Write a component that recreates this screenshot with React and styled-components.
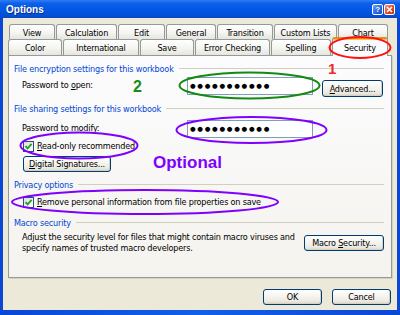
import React from "react";
import styled, { createGlobalStyle } from "styled-components";

const FONT = `"DejaVu Sans Condensed", "Liberation Sans", Tahoma, sans-serif`;

const Global = createGlobalStyle`
  html, body { margin: 0; padding: 0; background: #ffffff; overflow: hidden; }
  body { font-family: ${FONT}; }
`;

const Window = styled.div`
  position: relative;
  width: 400px;
  height: 315px;
  display: flex;
  flex-direction: column;
  background: linear-gradient(90deg, #0a47d6, #1160ea 50%, #0a47d6);
  font-family: ${FONT};
  font-size: 9px;
  letter-spacing: -0.18px;
  color: #000;
  box-sizing: border-box;
`;

const TitleBar = styled.div`
  height: 18px;
  flex: none;
  display: flex;
  align-items: center;
  padding: 0 5px 0 6px;
  background: linear-gradient(#2f7cf5 0%, #0b5fe9 20%, #0457e2 55%, #0350d6 85%, #0a47c4 100%);
`;

const Title = styled.div`
  flex: 1;
  color: #ffffff;
  font-weight: bold;
  font-size: 10px;
  letter-spacing: 0;
  font-family: "Liberation Sans", sans-serif;
  text-shadow: 1px 1px 0 #0c2a86;
`;

const CapButton = styled.div`
  width: 11px;
  height: 11px;
  box-sizing: border-box;
  margin-left: 1px;
  border: 1px solid #ffffff;
  border-radius: 2px;
  display: flex;
  align-items: center;
  justify-content: center;
  color: #ffffff;
  font-weight: bold;
  font-size: 8px;
  font-family: "Liberation Sans", sans-serif;
  background: ${(p) =>
    p.$close
      ? "linear-gradient(135deg, #f39a7d, #e2461f 55%, #c1330f)"
      : "linear-gradient(135deg, #76a5f8, #2a66e6 55%, #1a4fcf)"};
`;

const Body = styled.div`
  flex: 1;
  margin: 0 3px 5px 3px;
  background: #ece9d8;
  padding: 6px 5px 0 5px;
  display: flex;
  flex-direction: column;
`;

const TabStrip = styled.div`
  display: flex;
  flex-direction: column;
  flex: none;
`;

const TabRow = styled.div`
  display: flex;
  gap: 1px;
  height: ${(p) => p.$h}px;
  align-items: flex-end;
  margin-left: ${(p) => p.$indent}px;
`;

const Tab = styled.div`
  position: relative;
  z-index: ${(p) => (p.$active ? 3 : 1)};
  flex: none;
  width: ${(p) => p.$w}px;
  height: ${(p) => (p.$active ? 19 : p.$h)}px;
  margin-bottom: ${(p) => (p.$active ? -1 : 0)}px;
  box-sizing: border-box;
  border: 1px solid #919b9c;
  border-bottom: none;
  border-top: ${(p) => (p.$active ? "2px solid #e68b2c" : "1px solid #919b9c")};
  border-radius: 3px 3px 0 0;
  background: ${(p) =>
    p.$active ? "#fcfcfe" : "linear-gradient(#ffffff, #f3f3ef 60%, #e6e5dd)"};
  box-shadow: ${(p) => (p.$active ? "inset 0 1px 0 #ffc73c" : "none")};
  display: flex;
  align-items: center;
  justify-content: center;
  white-space: nowrap;
  padding-top: ${(p) => (p.$active ? 0 : 1)}px;
`;

const Panel = styled.div`
  flex: none;
  height: 223px;
  box-sizing: border-box;
  border: 1px solid #919b9c;
  background: linear-gradient(#fcfcfe, #f4f3ee);
  box-shadow: 1px 1px 0 #d6d2c2;
  padding: 6px 7px 0 5px;
  display: flex;
  flex-direction: column;
`;

const Section = styled.div`
  display: flex;
  align-items: center;
  height: 13px;
  margin-top: ${(p) => p.$mt || 0}px;
  color: #0046d5;
  white-space: nowrap;
  &::after {
    content: "";
    flex: 1;
    height: 1px;
    margin-left: 5px;
    background: #d0d0bf;
  }
`;

const FieldRow = styled.div`
  display: flex;
  align-items: flex-start;
  padding-left: 8px;
  margin-top: ${(p) => p.$mt}px;
`;

const Label = styled.div`
  width: 165px;
  flex: none;
  line-height: 14px;
  padding-top: 1px;
`;

const Field = styled.div`
  width: 126px;
  height: 18px;
  flex: none;
  box-sizing: border-box;
  border: 1px solid #7f9db9;
  background: #ffffff;
  display: flex;
  align-items: center;
  padding-left: 2px;
  font-family: "DejaVu Sans", sans-serif;
  font-size: 6.5px;
  letter-spacing: 1.7px;
  color: #000;
`;

const Button = styled.div`
  width: ${(p) => p.$w}px;
  height: ${(p) => p.$h || 16}px;
  flex: none;
  box-sizing: border-box;
  margin-left: ${(p) => (p.$push ? "auto" : `${p.$ml || 0}px`)};
  margin-top: ${(p) => p.$mt || 0}px;
  border: 1px solid #003c74;
  border-radius: 3px;
  background: linear-gradient(#ffffff, #f5f4ef 45%, #ebe9e0 80%, #d8d3c6);
  box-shadow: inset -1px -1px 0 #d6d0c5;
  display: flex;
  align-items: center;
  justify-content: center;
  white-space: nowrap;
`;

const CheckRow = styled.div`
  display: flex;
  align-items: center;
  height: 12px;
  padding-left: 9px;
  margin-top: ${(p) => p.$mt}px;
  white-space: nowrap;
`;

const Box = styled.div`
  width: 11px;
  height: 11px;
  box-sizing: border-box;
  border: 1px solid #1c5180;
  background: linear-gradient(135deg, #dcdcd7, #ffffff);
  margin-right: 3px;
  display: flex;
  align-items: center;
  justify-content: center;
`;

const ButtonRow = styled.div`
  display: flex;
  padding-left: 9px;
  margin-top: ${(p) => p.$mt}px;
`;

const MacroRow = styled.div`
  display: flex;
  align-items: center;
  padding-left: 8px;
  margin-top: 3px;
`;

const MacroText = styled.div`
  width: 273px;
  flex: none;
  line-height: 11px;
`;

const Footer = styled.div`
  display: flex;
  justify-content: flex-end;
  gap: 10px;
  margin-top: 11px;
  padding-right: 1px;
`;

const Overlay = styled.svg`
  position: absolute;
  left: 0;
  top: 0;
  z-index: 10;
  pointer-events: none;
`;

const Note = styled.div`
  position: absolute;
  z-index: 11;
  left: ${(p) => p.$x}px;
  top: ${(p) => p.$y}px;
  color: ${(p) => p.$c};
  font-family: "Liberation Sans", sans-serif;
  font-weight: bold;
  font-size: ${(p) => p.$s}px;
  letter-spacing: 0;
  line-height: 1;
`;

const row1 = [
  ["View", 46],
  ["Calculation", 61],
  ["Edit", 47],
  ["General", 50],
  ["Transition", 56],
  ["Custom Lists", 63],
  ["Chart", 50],
];
const row2 = [
  ["Color", 54],
  ["International", 76],
  ["Save", 54],
  ["Error Checking", 75],
  ["Spelling", 60],
  ["Security", 56, true],
];

const Check = () => (
  <svg width="9" height="9" viewBox="0 0 9 9">
    <path d="M1.5 4.2 L3.6 6.4 L7.6 1.8" fill="none" stroke="#21a121" strokeWidth="1.8" />
  </svg>
);

const DOTS = "●●●●●●●●●●●";

export default function App() {
  return (
    <>
      <Global />
      <Window>
        <TitleBar>
          <Title>Options</Title>
          <CapButton>?</CapButton>
          <CapButton $close>
            <svg width="7" height="7" viewBox="0 0 7 7">
              <path d="M1 1 L6 6 M6 1 L1 6" stroke="#fff" strokeWidth="1.5" />
            </svg>
          </CapButton>
        </TitleBar>
        <Body>
          <TabStrip>
            <TabRow $h={15} $indent={1}>
              {row1.map(([t, w]) => (
                <Tab key={t} $w={w} $h={15}>
                  {t}
                </Tab>
              ))}
            </TabRow>
            <TabRow $h={16} $indent={0}>
              {row2.map(([t, w, a]) => (
                <Tab key={t} $w={w} $h={16} $active={a}>
                  {t}
                </Tab>
              ))}
            </TabRow>
          </TabStrip>
          <Panel>
            <Section>File encryption settings for this workbook</Section>
            <FieldRow $mt={2}>
              <Label>
                Password to <u>o</u>pen:
              </Label>
              <Field>{DOTS}</Field>
              <Button $w={61} $h={17} $ml={9} $mt={3}>
                <span>
                  <u>A</u>dvanced...
                </span>
              </Button>
            </FieldRow>
            <Section $mt={5}>File sharing settings for this workbook</Section>
            <FieldRow $mt={5}>
              <Label>
                Password to <u>m</u>odify:
              </Label>
              <Field>{DOTS}</Field>
            </FieldRow>
            <CheckRow $mt={2}>
              <Box>
                <Check />
              </Box>
              <span>
                <u>R</u>ead-only recommended
              </span>
            </CheckRow>
            <ButtonRow $mt={4}>
              <Button $w={88}>
                <span>
                  <u>D</u>igital Signatures...
                </span>
              </Button>
            </ButtonRow>
            <Section $mt={6}>Privacy options</Section>
            <CheckRow $mt={5}>
              <Box>
                <Check />
              </Box>
              <span>
                <u>R</u>emove personal information from file properties on save
              </span>
            </CheckRow>
            <Section $mt={8}>Macro security</Section>
            <MacroRow>
              <MacroText>
                Adjust the security level for files that might contain macro viruses and
                specify names of trusted macro developers.
              </MacroText>
              <Button $w={80} $push>
                <span>
                  Macro <u>S</u>ecurity...
                </span>
              </Button>
            </MacroRow>
          </Panel>
          <Footer>
            <Button $w={59}>
              <span>OK</span>
            </Button>
            <Button $w={59}>
              <span>Cancel</span>
            </Button>
          </Footer>
        </Body>

        <Overlay width="400" height="315" viewBox="0 0 400 315">
          <ellipse cx="360" cy="47.5" rx="30.5" ry="10.5" fill="none" stroke="#ff1010" strokeWidth="2" />
          <ellipse cx="249.5" cy="85.5" rx="70" ry="13" fill="none" stroke="#138a13" strokeWidth="2" />
          <ellipse cx="251.5" cy="130" rx="75" ry="13" fill="none" stroke="#8000ff" strokeWidth="2" />
          <ellipse cx="79" cy="145.5" rx="58.5" ry="13" fill="none" stroke="#8000ff" strokeWidth="2" />
          <ellipse cx="145" cy="202" rx="133" ry="12" fill="none" stroke="#8000ff" strokeWidth="2" />
        </Overlay>
        <Note $x={328} $y={61} $c="#f02a2a" $s={15}>
          1
        </Note>
        <Note $x={133} $y={79} $c="#1a8c1a" $s={16}>
          2
        </Note>
        <Note $x={153} $y={154} $c="#8000ff" $s={17}>
          Optional
        </Note>
      </Window>
    </>
  );
}
